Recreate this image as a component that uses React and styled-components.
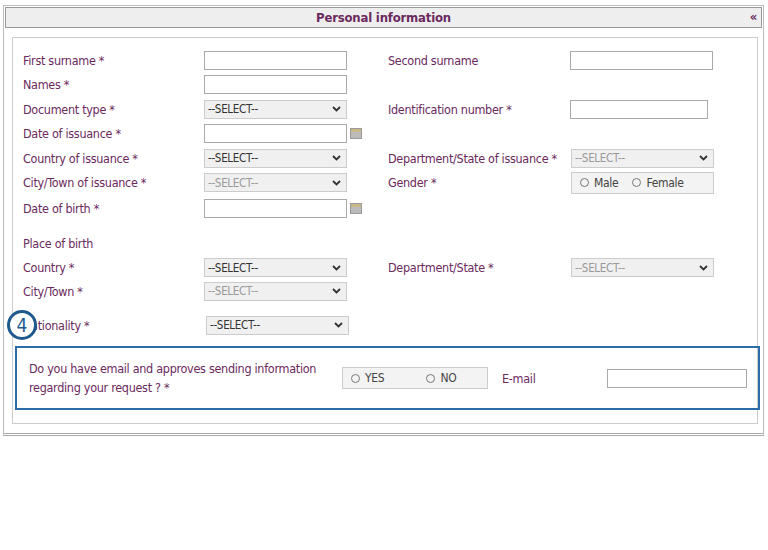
import React from "react";
import styled, { createGlobalStyle } from "styled-components";

const G = createGlobalStyle`
  body { margin: 0; background: #fff; font-family: "DejaVu Sans Condensed", "Liberation Sans", sans-serif; }
`;
const purple = "#6b2a5e";

const Frame = styled.div`
  margin: 5px 2px 0 3px; width: 761px; height: 431px; box-sizing: border-box;
  border: 1px solid #bbb; border-bottom: 3px double #aaa; padding: 1px;
`;
const Header = styled.div`
  height: 21px; background: #eeeeee; border: 1px solid #999; box-sizing: border-box;
  display: flex; align-items: center; justify-content: center; position: relative;
  color: ${purple}; font-weight: bold; font-size: 13px; letter-spacing: -0.2px;
`;
const Chev = styled.span`position: absolute; right: 4px; top: 1px; font-size: 13px;`;
const Panel = styled.div`
  margin: 9px 4px 0 7px; border: 1px solid #ccc; height: 387px; box-sizing: border-box;
  padding: 10px 0 0 10px; position: relative;
`;
const Row = styled.div`
  display: flex; align-items: center; height: ${p => p.h || 24.5}px; margin-top: ${p => p.mt || 0}px;
`;
const Label = styled.div`
  width: ${p => p.w || 181}px; flex: none; color: ${purple}; font-size: 12.5px; letter-spacing: -0.3px; white-space: nowrap;
`;
const Cell = styled.div`width: ${p => p.w || 184}px; flex: none; display: flex; align-items: center; gap: 3px;`;
const Input = styled.div`
  width: ${p => p.w || 143}px; height: 19px; box-sizing: border-box; border: 1px solid #aaa; background: #fff;
`;
const Sel = styled.div`
  width: ${p => p.w || 143}px; height: 19px; box-sizing: border-box; border: 1px solid #ccc; background: #f0f0f0;
  display: flex; align-items: center; justify-content: space-between; padding: 0 5px 0 3px;
  font-size: 11.5px; letter-spacing: -0.3px; color: ${p => (p.dis ? "#999" : "#333")};
`;
const Cal = styled.div`
  width: 12px; height: 11px; background: linear-gradient(#c9b98a 0 3px, #bbb 3px); border: 1px solid #999; box-sizing: border-box;
`;
const RadioBox = styled.div`
  width: ${p => p.w}px; height: 22px; box-sizing: border-box; border: 1px solid #ccc; background: #f3f3f3;
  display: flex; align-items: center; gap: 14px; padding-left: 8px; font-size: 12px; letter-spacing: -0.3px; color: #444;
`;
const Opt = styled.span`display: flex; align-items: center; gap: 5px;`;
const Dot = styled.span`width: 7px; height: 7px; border: 1px solid #777; border-radius: 50%; display: inline-block;`;
const Badge = styled.div`
  position: absolute; left: -6px; top: 272px; width: 24px; height: 24px; border: 3px solid #1e5a8e;
  border-radius: 50%; background: #fff; color: #1e5a8e; font-size: 19px; display: flex;
  align-items: center; justify-content: center;
`;
const Blue = styled.div`
  margin: 8px 0 0 -8px; width: 745px; height: 64px; box-sizing: border-box; border: 2px solid #2b6ca9;
  display: flex; align-items: center; padding-left: 12px;
`;
const Q = styled.div`width: 313px; color: ${purple}; font-size: 12.5px; letter-spacing: -0.3px; line-height: 19px;`;

const S = ({ w, dis }) => (
  <Sel w={w} dis={dis}>--SELECT--<svg width="9" height="6" viewBox="0 0 9 6"><path d="M1 1l3.5 3.5L8 1" stroke="#333" strokeWidth="1.8" fill="none"/></svg></Sel>
);

export default function App() {
  return (
    <>
      <G />
      <Frame>
        <Header>Personal information<Chev>«</Chev></Header>
        <Panel>
          <Row><Label>First surname *</Label><Cell><Input /></Cell><Label w={182}>Second surname</Label><Input /></Row>
          <Row><Label>Names *</Label><Cell><Input /></Cell></Row>
          <Row><Label>Document type *</Label><Cell><S /></Cell><Label w={182}>Identification number *</Label><Input w={138} /></Row>
          <Row><Label>Date of issuance *</Label><Cell><Input /><Cal /></Cell></Row>
          <Row><Label>Country of issuance *</Label><Cell><S /></Cell><Label w={183}>Department/State of issuance *</Label><S dis /></Row>
          <Row><Label>City/Town of issuance *</Label><Cell><S dis /></Cell><Label w={183}>Gender *</Label><RadioBox w={143}><Opt><Dot />Male</Opt><Opt><Dot />Female</Opt></RadioBox></Row>
          <Row h={27}><Label>Date of birth *</Label><Cell><Input /><Cal /></Cell></Row>
          <Row mt={9}><Label>Place of birth</Label></Row>
          <Row><Label>Country *</Label><Cell><S /></Cell><Label w={183}>Department/State *</Label><S dis /></Row>
          <Row h={22}><Label>City/Town *</Label><Cell><S dis /></Cell></Row>
          <Row h={26} mt={10}><Label w={183}>Nationality *</Label><Cell><S /></Cell></Row>
          <Badge>4</Badge>
          <Blue>
            <Q>Do you have email and approves sending information regarding your request ? *</Q>
            <RadioBox w={146}><Opt><Dot />YES</Opt><Opt style={{ marginLeft: 28 }}><Dot />NO</Opt></RadioBox>
            <Label w={105} style={{ paddingLeft: 14 }}>E-mail</Label>
            <Input w={140} />
          </Blue>
        </Panel>
      </Frame>
    </>
  );
}
